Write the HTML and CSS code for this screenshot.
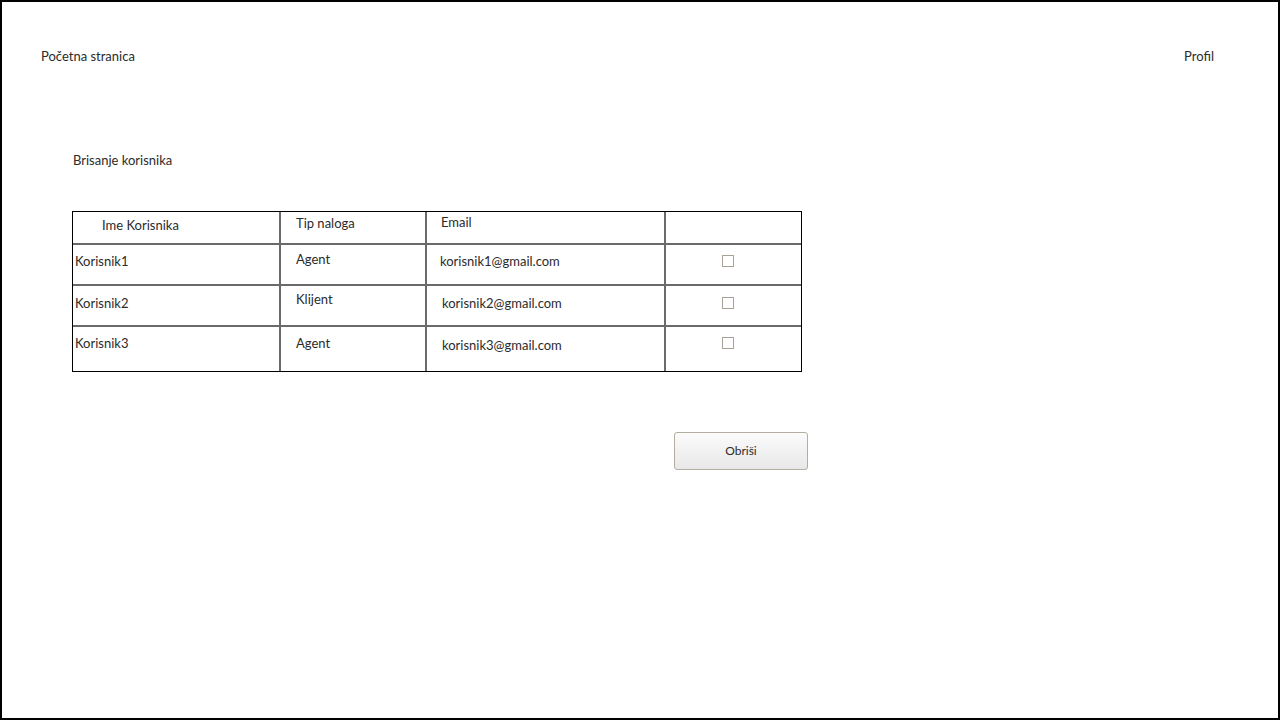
FILE: index.html
```html
<!DOCTYPE html>
<html lang="hr">
<head>
<meta charset="utf-8">
<title>Brisanje korisnika</title>
<link rel="stylesheet" href="styles.css">
</head>
<body>
<div class="frame">
  <nav class="nav">
    <span class="nav__link">Početna stranica</span>
    <span class="nav__link">Profil</span>
  </nav>
  <main class="main">
    <h1 class="title">Brisanje korisnika</h1>
    <div class="table">
      <div class="cell head c1 pl-name">Ime Korisnika</div>
      <div class="cell head c2 up2">Tip naloga</div>
      <div class="cell head c3 up3">Email</div>
      <div class="cell head c4"></div>

      <div class="cell row c1">Korisnik1</div>
      <div class="cell row c2 up2">Agent</div>
      <div class="cell row c3 pl-e1">korisnik1@gmail.com</div>
      <div class="cell row c4"><span class="check"></span></div>

      <div class="cell row r2 c1">Korisnik2</div>
      <div class="cell row r2 c2 up4">Klijent</div>
      <div class="cell row r2 c3">korisnik2@gmail.com</div>
      <div class="cell row r2 c4"><span class="check"></span></div>

      <div class="cell row last c1">Korisnik3</div>
      <div class="cell row last c2">Agent</div>
      <div class="cell row last c3 down2">korisnik3@gmail.com</div>
      <div class="cell row last c4"><span class="check"></span></div>
    </div>
    <div class="actions">
      <button class="btn" type="button">Obriši</button>
    </div>
  </main>
</div>
</body>
</html>
```
FILE: styles.css
```css
* { box-sizing: border-box; }
html, body { margin: 0; padding: 0; background: #fff; }
body {
  font-family: Lato, "Open Sans", "Liberation Sans", sans-serif;
  font-size: 13px;
  line-height: 16px;
  color: #2b2b2b;
}
.frame {
  width: 1280px;
  height: 720px;
  border: 2px solid #000;
  display: flex;
  flex-direction: column;
}
.nav {
  display: flex;
  justify-content: space-between;
  padding: 46px 64px 0 39px;
}
.nav__link { display: block; height: 16px; }
.main {
  padding: 88px 0 0 70px;
  display: flex;
  flex-direction: column;
}
.title {
  margin: 0;
  font-size: 13px;
  font-weight: normal;
  line-height: 16px;
  padding-left: 1px;
}
.table {
  margin-top: 43px;
  width: 730px;
  border: 1px solid #000;
  display: grid;
  grid-template-columns: 208px 146px 239px 135px;
  grid-template-rows: 33px 41px 41px 44px;
}
.cell {
  border-right: 2px solid #6a6a6a;
  border-bottom: 2px solid #6a6a6a;
  white-space: nowrap;
}
.cell.c4 { border-right: none; }
.cell.last { border-bottom: none; }
.head { padding-top: 5px; }
.row { padding-top: 8px; }
.r2 { padding-top: 9px; }
.c1 { padding-left: 2px; }
.c2 { padding-left: 15px; }
.c3 { padding-left: 15px; }
.c4 { padding-left: 56px; }
.head.c3 { padding-left: 14px; }
.pl-name { padding-left: 29px; }
.pl-e1 { padding-left: 13px; }
.up2 { padding-top: 6px; }
.head.up2 { padding-top: 3px; }
.head.up3 { padding-top: 2px; }
.up4 { padding-top: 5px; }
.down2 { padding-top: 10px; }
.row.c4 { padding-top: 10px; }
.row.r2.c4 { padding-top: 11px; }
.row.last.c4 { padding-top: 10px; }
.check {
  display: block;
  width: 12px;
  height: 12px;
  border: 1px solid #a8a298;
  background: #fff;
}
.actions {
  margin-top: 60px;
  padding-left: 602px;
}
.btn {
  width: 134px;
  height: 38px;
  border: 1px solid #b5ad9f;
  border-radius: 3px;
  background: linear-gradient(#fbfbfb, #e8e8e8);
  font-family: Lato, "Open Sans", "Liberation Sans", sans-serif;
  font-size: 12px;
  line-height: 16px;
  color: #2b2b2b;
  padding: 0 0 1px 0;
}
```
